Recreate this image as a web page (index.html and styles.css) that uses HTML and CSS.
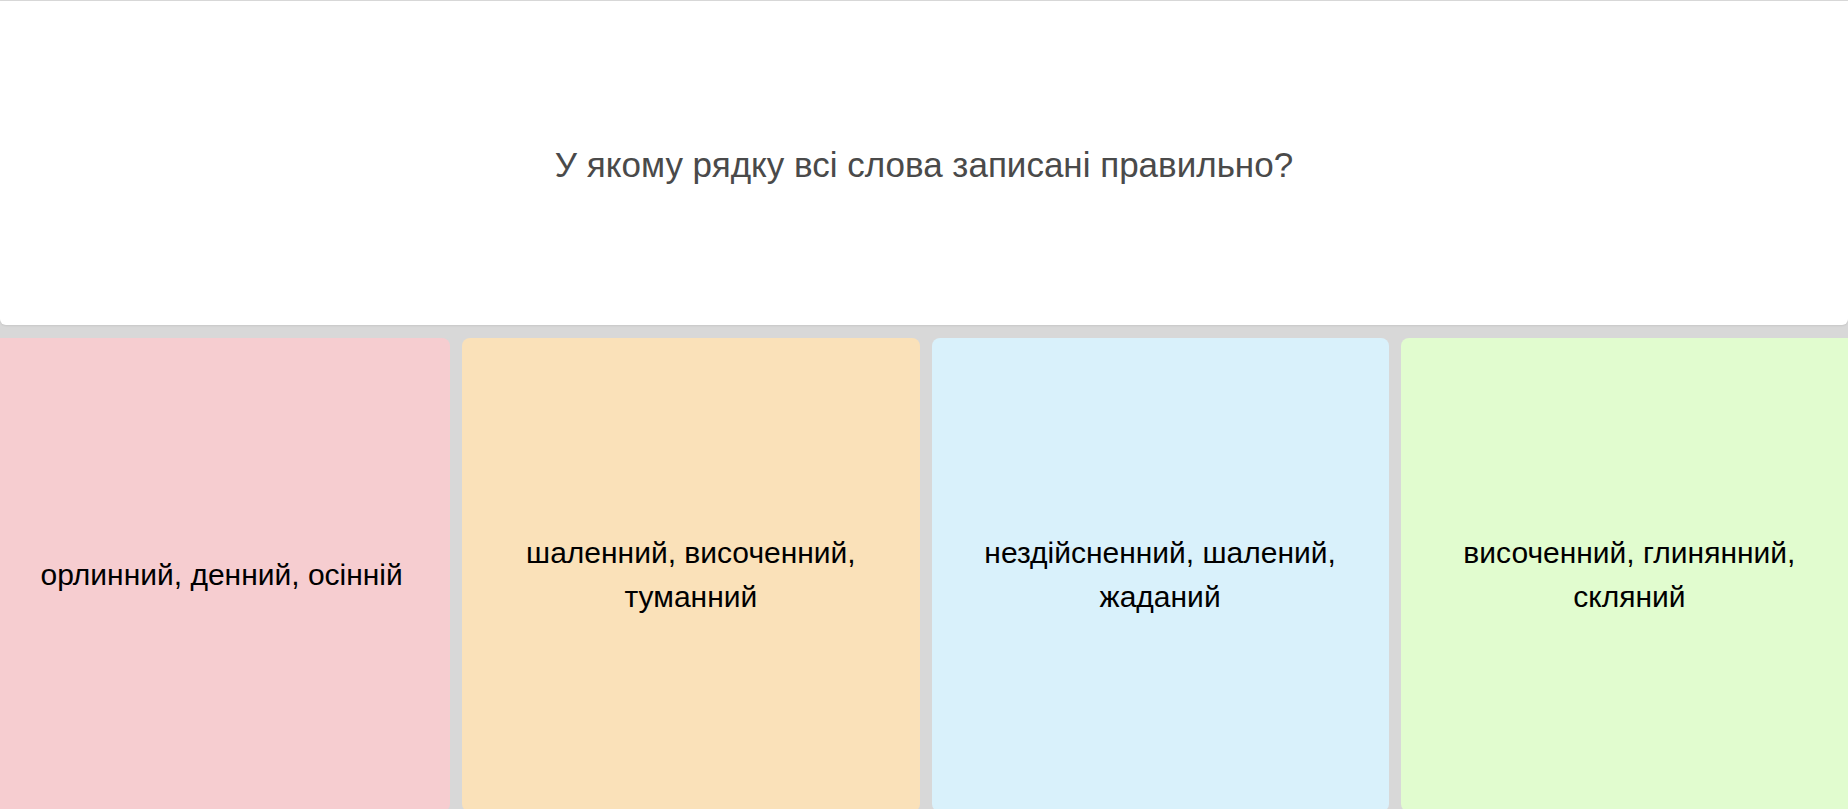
FILE: index.html
```html
<!DOCTYPE html>
<html>

<head>
  <title>Тест</title>
  <link rel="stylesheet" href="styles.css">
</head>

<body>
  <div class="question-panel">
    <h2 class="question-text">У якому рядку всі слова записані правильно?</h2>
  </div>
  <div class="answers">
    <div class="answer-card card-red">
      <span>орлинний, денний, осінній</span>
    </div>
    <div class="answer-card card-orange">
      <span>шаленний, височенний, туманний</span>
    </div>
    <div class="answer-card card-blue">
      <span>нездійсненний, шалений, жаданий</span>
    </div>
    <div class="answer-card card-green">
      <span>височенний, глинянний, скляний</span>
    </div>
  </div>
</body>

</html>
```

FILE: styles.css
```css
body {
  margin: 0;
  background-color: #d8d8d8;
  font-family: "Liberation Sans", Arial, sans-serif;
  overflow: hidden;
}

.question-panel {
  margin-top: 1px;
  height: 324px;
  padding-top: 4px;
  box-sizing: border-box;
  background-color: #ffffff;
  border-radius: 0 0 6px 6px;
  box-shadow: 0 1px 2px rgba(0, 0, 0, 0.08);
  display: flex;
  align-items: center;
  justify-content: center;
}

.question-text {
  margin: 0;
  font-size: 35px;
  font-weight: normal;
  color: #4a4a4a;
}

.answers {
  display: flex;
  gap: 12px;
  margin: 13px -10px 0 -7px;
}

.answer-card {
  flex: 1;
  height: 474px;
  border-radius: 8px;
  padding: 0 20px;
  display: flex;
  align-items: center;
  justify-content: center;
  text-align: center;
  font-size: 30px;
  line-height: 44px;
  color: #000000;
}

.card-red {
  background-color: #f6cdd0;
}

.card-orange {
  background-color: #fae1b9;
}

.card-blue {
  background-color: #d9f1fb;
}

.card-green {
  background-color: #e1fccf;
}
```
